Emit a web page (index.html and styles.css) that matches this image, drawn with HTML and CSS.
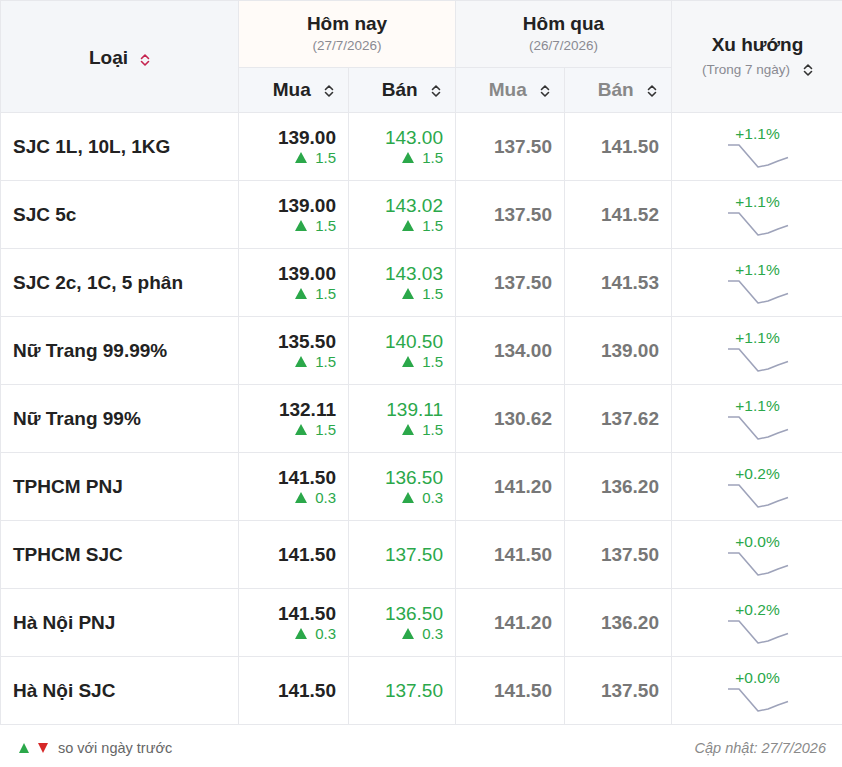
FILE: index.html
```html
<!DOCTYPE html>
<html lang="vi">
<head>
<meta charset="utf-8">
<title>Giá vàng</title>
<link rel="stylesheet" href="styles.css">
</head>
<body>
<div class="wrap">
<table class="gold">
  <colgroup>
    <col class="c-type"><col class="c-v1"><col class="c-v2"><col class="c-v3"><col class="c-v4"><col class="c-trend">
  </colgroup>
  <thead>
    <tr class="h1">
      <th rowspan="2" class="th-type"><span class="hd">Loại <svg class="sort sort-red" viewBox="0 0 10 14"><path d="M1.5 5.5 L5 2 L8.5 5.5 M1.5 8.5 L5 12 L8.5 8.5"/></svg></span></th>
      <th colspan="2" class="th-today"><div class="big">Hôm nay</div><div class="date">(27/7/2026)</div></th>
      <th colspan="2" class="th-yest"><div class="big">Hôm qua</div><div class="date">(26/7/2026)</div></th>
      <th rowspan="2" class="th-trend"><div class="big">Xu hướng</div><div class="date sub">(Trong 7 ngày) <svg class="sort" viewBox="0 0 10 14"><path d="M1.5 5.5 L5 2 L8.5 5.5 M1.5 8.5 L5 12 L8.5 8.5"/></svg></div></th>
    </tr>
    <tr class="h2">
      <th class="sub-h">Mua <svg class="sort" viewBox="0 0 10 14"><path d="M1.5 5.5 L5 2 L8.5 5.5 M1.5 8.5 L5 12 L8.5 8.5"/></svg></th>
      <th class="sub-h">Bán <svg class="sort" viewBox="0 0 10 14"><path d="M1.5 5.5 L5 2 L8.5 5.5 M1.5 8.5 L5 12 L8.5 8.5"/></svg></th>
      <th class="sub-h muted">Mua <svg class="sort" viewBox="0 0 10 14"><path d="M1.5 5.5 L5 2 L8.5 5.5 M1.5 8.5 L5 12 L8.5 8.5"/></svg></th>
      <th class="sub-h muted">Bán <svg class="sort" viewBox="0 0 10 14"><path d="M1.5 5.5 L5 2 L8.5 5.5 M1.5 8.5 L5 12 L8.5 8.5"/></svg></th>
    </tr>
  </thead>
  <tbody id="rows"></tbody>
</table>
<div class="foot">
  <div class="legend"><span class="tri up"></span><span class="tri down"></span><span class="legend-text">so với ngày trước</span></div>
  <div class="updated">Cập nhật: 27/7/2026</div>
</div>
</div>
<script src="app.js"></script>
</body>
</html>
```
FILE: app.js
```js
var data = [
  ["SJC 1L, 10L, 1KG", "139.00", "1.5", "143.00", "1.5", "137.50", "141.50", "+1.1%"],
  ["SJC 5c", "139.00", "1.5", "143.02", "1.5", "137.50", "141.52", "+1.1%"],
  ["SJC 2c, 1C, 5 phân", "139.00", "1.5", "143.03", "1.5", "137.50", "141.53", "+1.1%"],
  ["Nữ Trang 99.99%", "135.50", "1.5", "140.50", "1.5", "134.00", "139.00", "+1.1%"],
  ["Nữ Trang 99%", "132.11", "1.5", "139.11", "1.5", "130.62", "137.62", "+1.1%"],
  ["TPHCM PNJ", "141.50", "0.3", "136.50", "0.3", "141.20", "136.20", "+0.2%"],
  ["TPHCM SJC", "141.50", "", "137.50", "", "141.50", "137.50", "+0.0%"],
  ["Hà Nội PNJ", "141.50", "0.3", "136.50", "0.3", "141.20", "136.20", "+0.2%"],
  ["Hà Nội SJC", "141.50", "", "137.50", "", "141.50", "137.50", "+0.0%"]
];
function chg(v) {
  return v ? '<div class="chg"><span class="tri up"></span>' + v + '</div>' : '';
}
var spark = '<svg class="spark" viewBox="0 0 62 24"><polyline points="1,1 12,1 31,23 41,21 51,17 61,13.5"/></svg>';
var html = '';
data.forEach(function (r) {
  html += '<tr>' +
    '<td class="name">' + r[0] + '</td>' +
    '<td class="num"><div class="val">' + r[1] + '</div>' + chg(r[2]) + '</td>' +
    '<td class="num"><div class="val green">' + r[3] + '</div>' + chg(r[4]) + '</td>' +
    '<td class="num"><div class="val grey">' + r[5] + '</div></td>' +
    '<td class="num"><div class="val grey">' + r[6] + '</div></td>' +
    '<td class="trend"><div class="pct">' + r[7] + '</div>' + spark + '</td>' +
    '</tr>';
});
document.getElementById('rows').innerHTML = html;
```
FILE: styles.css
```css
html, body {
  margin: 0;
  padding: 0;
  background: #ffffff;
}
body {
  font-family: "Liberation Sans", Arial, sans-serif;
  color: #222;
}
.wrap {
  width: 842px;
}
.gold {
  border-collapse: collapse;
  table-layout: fixed;
  width: 843px;
}
.c-type { width: 238px; }
.c-v1 { width: 110px; }
.c-v2 { width: 107px; }
.c-v3 { width: 109px; }
.c-v4 { width: 107px; }
.c-trend { width: 172px; }

.gold th, .gold td {
  border: 1px solid #e7e8ec;
  padding: 0;
}
.gold th {
  font-weight: bold;
  vertical-align: middle;
  text-align: center;
}
.h1 th { height: 66px; }
.h2 th { height: 44px; }

.th-type { background: #f4f6f9; font-size: 19px; }
.th-today { background: #fffbf8; }
.th-yest { background: #f6f7f9; }
.th-trend { background: #f6f7f9; }
.sub-h { background: #f5f7fa; font-size: 19px; text-align: right !important; padding-right: 14px !important; }
.sub-h.muted { color: #888; }

.hd { display: inline-flex; align-items: center; gap: 12px; padding-top: 2px; }
.big { font-size: 19px; line-height: 22px; }
.date { font-size: 13.5px; font-weight: normal; color: #8a8a92; line-height: 18px; margin-top: 2px; }
.th-trend .sub { margin-top: 5px; display: inline-flex; align-items: center; gap: 13px; }

.sort {
  width: 10px;
  height: 14px;
  vertical-align: -2px;
  margin-left: 8px;
  fill: none;
  stroke: #333;
  stroke-width: 1.6;
  stroke-linecap: round;
  stroke-linejoin: round;
}
.hd .sort { margin-left: 0; margin-top: 4px; }
.sub .sort { margin-left: 0; }
.sort-red { stroke: #c5234f; }

.gold td { height: 67px; vertical-align: middle; }
.name { font-size: 19px; font-weight: bold; padding-left: 12px !important; color: #222; }
.num { text-align: right; padding-right: 12px !important; }
.val { font-size: 19px; font-weight: bold; line-height: 22px; color: #222; }
.val.green { color: #2ba84a; font-weight: normal; }
.val.grey { color: #777; }
.chg { font-size: 15px; line-height: 18px; color: #2ba84a; display: flex; justify-content: flex-end; align-items: center; gap: 8px; }

.tri { display: inline-block; width: 0; height: 0; border-left: 6px solid transparent; border-right: 6px solid transparent; }
.tri.up { border-bottom: 11px solid #2ba84a; }
.tri.down { border-top: 11px solid #d62828; }

.trend { text-align: center; }
.pct { font-size: 15.5px; line-height: 16px; color: #2ba84a; }
.spark { display: block; width: 62px; height: 24px; margin: 2px auto 0; }
.spark polyline { fill: none; stroke: #9ea3ba; stroke-width: 1.6; stroke-linejoin: round; }

.foot {
  display: flex;
  justify-content: space-between;
  align-items: center;
  height: 46px;
  padding: 0 16px 0 19px;
}
.legend { display: flex; align-items: center; gap: 9px; }
.legend .tri { border-left-width: 5px; border-right-width: 5px; }
.legend .tri.up { border-bottom-width: 10px; }
.legend .tri.down { border-top-width: 10px; }
.legend-text { font-size: 14.5px; color: #666; margin-left: 1px; }
.updated { font-size: 14.5px; color: #8a8a8a; font-style: italic; }
```
